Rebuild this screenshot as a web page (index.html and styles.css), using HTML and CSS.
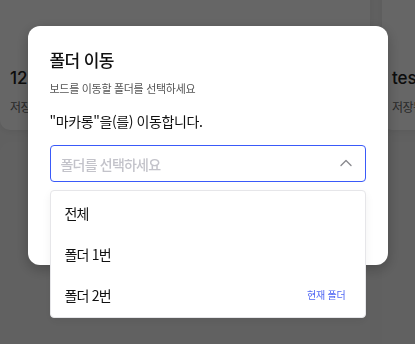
FILE: index.html
```html
<!DOCTYPE html>
<html lang="ko">
<head>
  <meta charset="UTF-8">
  <meta name="viewport" content="width=device-width, initial-scale=1">
  <title>폴더 이동</title>
  <link rel="stylesheet" href="styles.css">
</head>
<body>

  <!-- Board list behind the dialog -->
  <div class="board-grid">
    <div class="board-card">
      <p class="board-name">123</p>
      <p class="board-meta">저장됨</p>
    </div>
    <div class="board-card">
      <p class="board-name">test</p>
      <p class="board-meta">저장됨</p>
    </div>
    <div class="board-card tall"></div>
    <div class="board-card tall"></div>
  </div>

  <!-- Move folder dialog -->
  <div class="overlay">
    <div class="modal">
      <h2 class="modal-title">폴더 이동</h2>
      <p class="modal-desc">보드를 이동할 폴더를 선택하세요</p>
      <p class="modal-msg">"마카롱"을(를) 이동합니다.</p>

      <div class="select-wrap">
        <div class="select open">
          <span class="placeholder">폴더를 선택하세요</span>
          <svg class="chevron" width="12" height="8" viewBox="0 0 12 8">
            <path d="M1 6.5 L6 1.5 L11 6.5" fill="none" stroke="#8a8a8f" stroke-width="1.4" stroke-linecap="round" stroke-linejoin="round"/>
          </svg>
        </div>

        <ul class="options">
          <li class="option">전체</li>
          <li class="option">폴더 1번</li>
          <li class="option">폴더 2번<span class="current">현재 폴더</span></li>
        </ul>
      </div>

      <div class="modal-actions">
        <button class="btn cancel">취소</button>
        <button class="btn confirm">이동</button>
      </div>
    </div>
  </div>

</body>
</html>
```

FILE: styles.css
```css
body {
  font-family: 'Noto Sans CJK KR', 'Noto Sans', sans-serif;
  background: #f0f0f0;
  margin: 0;
  overflow: hidden;
}

p, h2, ul {
  margin: 0;
  padding: 0;
}

/* background page */
.board-grid {
  display: grid;
  grid-template-columns: 370px 370px;
  gap: 12px;
  margin-top: -20px;
}

.board-card {
  background: white;
  border-radius: 10px;
  height: 150px;
  padding: 0 10px;
  box-sizing: border-box;
  box-shadow: 0 2px 6px rgba(0, 0, 0, 0.06);
}

.board-card.tall {
  height: 240px;
  background: #f2f2f2;
  box-shadow: none;
}

.board-name {
  font-family: 'Inter', 'Noto Sans CJK KR', sans-serif;
  font-size: 17px;
  font-weight: 500;
  color: #222;
  margin-top: 86px;
  line-height: 24px;
}

.board-meta {
  font-size: 12px;
  color: #666;
  margin-top: 8px;
  letter-spacing: -0.5px;
}

/* dialog */
.overlay {
  position: fixed;
  inset: 0;
  background: rgba(0, 0, 0, 0.6);
  display: flex;
  justify-content: center;
  align-items: flex-start;
  padding-top: 26px;
}

.modal {
  width: 360px;
  box-sizing: border-box;
  background: white;
  border-radius: 12px;
  padding: 21px 22px 19px;
  box-shadow: 0 4px 14px rgba(0, 0, 0, 0.25);
}

.modal-title {
  font-size: 17px;
  font-weight: 500;
  line-height: 26px;
  color: #111;
  letter-spacing: -0.6px;
}

.modal-desc {
  font-size: 11px;
  line-height: 18px;
  color: #555;
  margin-top: 6px;
  letter-spacing: -0.3px;
}

.modal-msg {
  font-size: 14px;
  line-height: 20px;
  color: #111;
  margin-top: 14px;
  letter-spacing: -0.4px;
}

.select-wrap {
  position: relative;
  margin-top: 14px;
}

.select {
  height: 37px;
  box-sizing: border-box;
  border: 1px solid #3a5af9;
  border-radius: 4px;
  display: flex;
  align-items: center;
  justify-content: space-between;
  padding: 0 13px 0 10px;
}

.placeholder {
  font-size: 14px;
  font-weight: 500;
  color: #c3c3ca;
  letter-spacing: -0.8px;
}

.chevron {
  margin-top: -1px;
}

.options {
  list-style: none;
  position: absolute;
  top: 45px;
  left: 0;
  right: 0;
  background: white;
  border: 1px solid #e6e6e9;
  border-radius: 4px;
  padding: 1px 0 2px;
  box-shadow: 0 4px 10px rgba(0, 0, 0, 0.06);
  z-index: 2;
}

.option {
  height: 41px;
  display: flex;
  align-items: center;
  justify-content: space-between;
  padding: 0 19px 0 14px;
  font-size: 14px;
  color: #111;
  letter-spacing: -0.8px;
}

.current {
  font-size: 10px;
  color: #5168f4;
  letter-spacing: -0.2px;
}

.modal-actions {
  display: flex;
  justify-content: flex-end;
  gap: 8px;
  margin-top: 24px;
}

.btn {
  height: 40px;
  width: 80px;
  border: none;
  border-radius: 6px;
  font-family: inherit;
  font-size: 14px;
}

.cancel {
  background: #f1f1f4;
  color: #333;
}

.confirm {
  background: #3a5af9;
  color: white;
}
```
